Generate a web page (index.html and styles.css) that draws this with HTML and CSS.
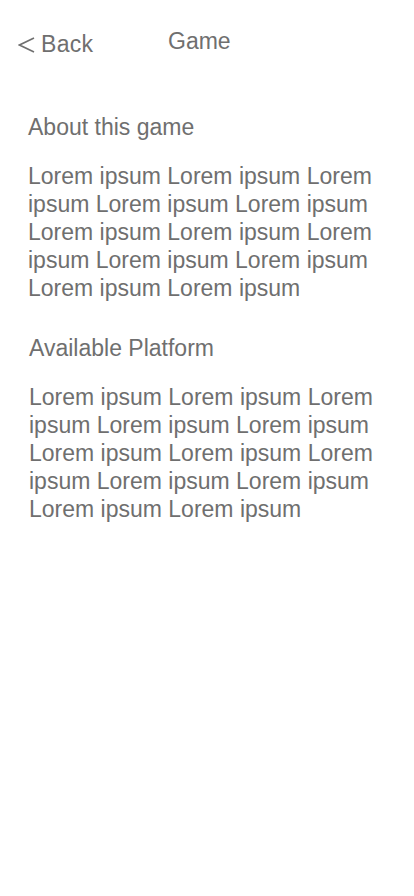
FILE: index.html
```html
<!DOCTYPE html>
<html>
<head>
<meta charset="utf-8">
<link rel="stylesheet" href="styles.css">
</head>
<body>
<header class="topbar">
  <a class="back">
    <svg class="chev" width="17" height="16" viewBox="0 0 17 16" aria-hidden="true"><polyline points="16,1 1.5,8 16,15" fill="none" stroke="#6f6f6f" stroke-width="1.6" stroke-linejoin="miter"/></svg>
    <span class="back-label">Back</span>
  </a>
  <h1 class="title">Game</h1>
</header>
<main class="content">
  <section class="section">
    <h2 class="heading">About this game</h2>
    <p class="body">Lorem ipsum Lorem ipsum Lorem ipsum Lorem ipsum Lorem ipsum Lorem ipsum Lorem ipsum Lorem ipsum Lorem ipsum Lorem ipsum Lorem ipsum Lorem ipsum</p>
  </section>
  <section class="section second">
    <h2 class="heading">Available Platform</h2>
    <p class="body">Lorem ipsum Lorem ipsum Lorem ipsum Lorem ipsum Lorem ipsum Lorem ipsum Lorem ipsum Lorem ipsum Lorem ipsum Lorem ipsum Lorem ipsum Lorem ipsum</p>
  </section>
</main>
</body>
</html>
```
FILE: styles.css
```css
* { box-sizing: border-box; }
html, body {
  margin: 0;
  padding: 0;
  background: #ffffff;
}
body {
  font-family: "Liberation Sans", Arial, sans-serif;
  color: #6f6f6f;
  width: 414px;
  min-height: 896px;
}
.topbar {
  display: flex;
  align-items: flex-start;
  padding: 27px 0 0 18px;
  height: 113px;
}
.back {
  display: flex;
  align-items: center;
  gap: 6px;
  font-size: 23px;
  line-height: 28px;
  margin-top: 3px;
  width: 150px;
  white-space: nowrap;
}
.chev {
  display: block;
  flex: none;
  margin-top: 1px;
}
.back-label {
  letter-spacing: 0.3px;
}
.title {
  margin: 0;
  font-size: 23px;
  font-weight: normal;
  line-height: 28px;
}
.content {
  padding: 0 28px;
}
.section.second {
  margin-top: 32px;
  padding-left: 1px;
}
.heading {
  margin: 0;
  font-size: 23px;
  font-weight: normal;
  line-height: 28px;
}
.body {
  margin: 21px 0 0;
  font-size: 23px;
  line-height: 28px;
}
```
